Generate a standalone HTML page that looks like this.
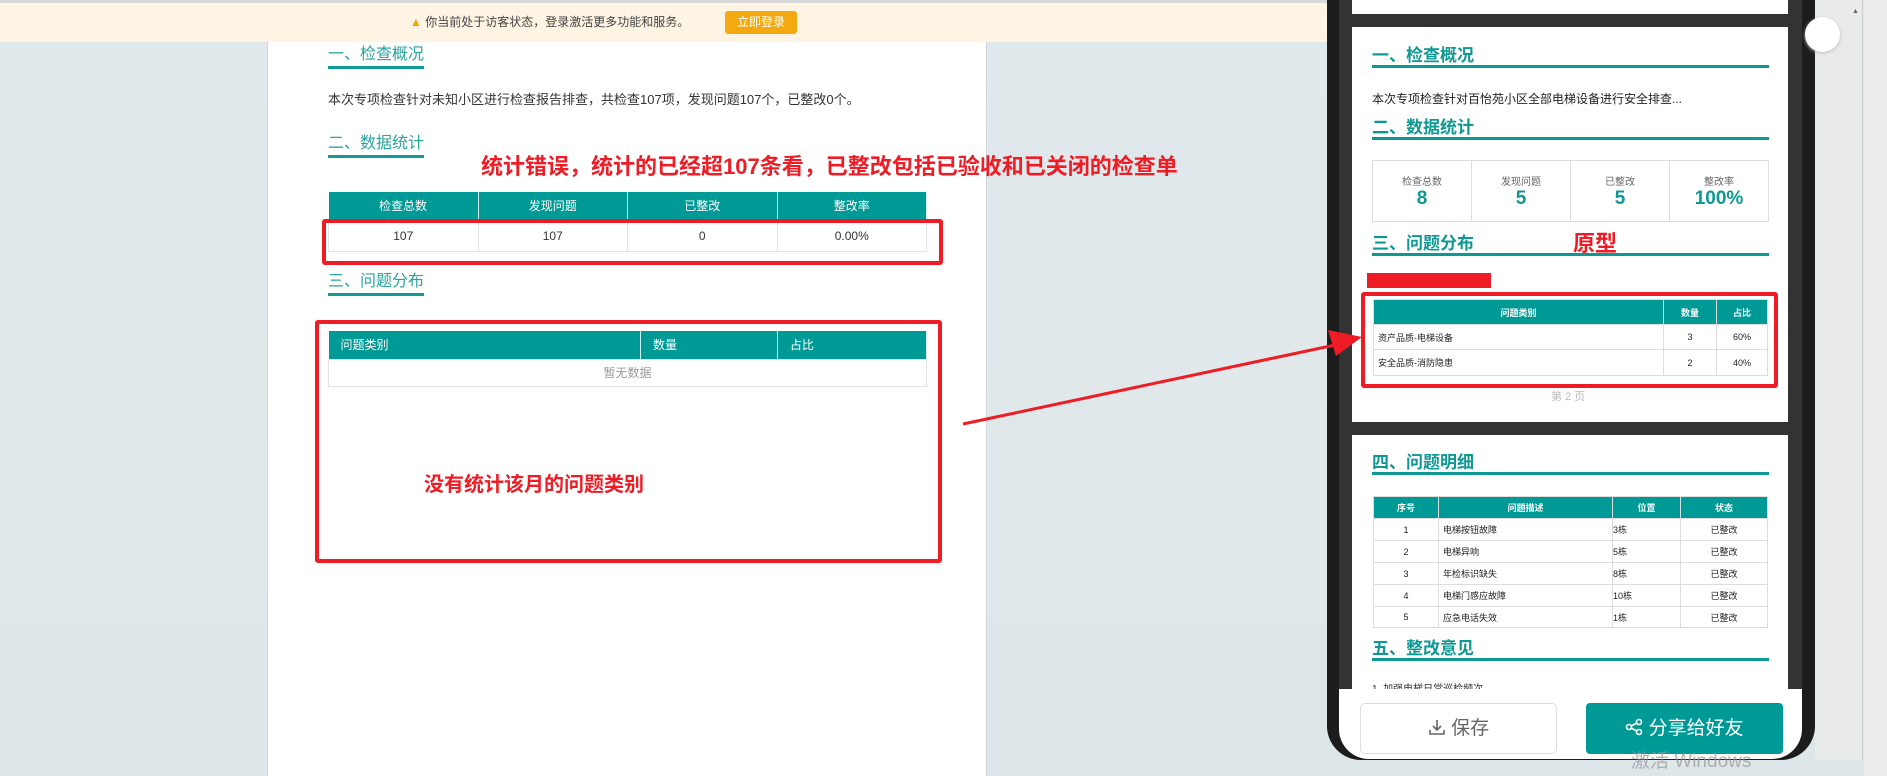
<!DOCTYPE html>
<html><head><meta charset="utf-8"><style>
*{margin:0;padding:0;box-sizing:border-box}
body{width:1887px;height:776px;overflow:hidden;position:relative;background:linear-gradient(180deg,#e2e9ec,#dde6e9);font-family:"Liberation Sans","Noto Sans CJK SC",sans-serif}
.abs{position:absolute}
.banner{left:0;top:0;width:1327px;height:42px;background:#fdf4e3;border-top:3px solid #d8d8d8}
.page{left:267px;top:42px;width:720px;height:734px;background:#fff;border-left:1px solid #d0d8dc;border-right:1px solid #d0d8dc}
.h{color:#2aa3a0;font-size:16px;border-bottom:3px solid #119b97;padding-bottom:1px;line-height:20px}
table{border-collapse:collapse;table-layout:fixed}
.t1{left:328px;width:599px;font-size:12px;color:#333}
.t1 th{background:#009a96;color:#fff;font-weight:normal;height:28px;border-right:1px solid #d9eeee}
.t1 td{height:31px;text-align:center;border:1px solid #e3e3e3}
.red{color:#ee1c25;font-weight:bold}
.rbox{border:4px solid #ee1c25;border-radius:3px}
.phone{left:1327px;top:0;width:488px;height:760px;background:#1c1c1c;border-radius:0 0 34px 34px}
.inner{left:1339px;top:0;width:463px;height:700px;background:#333}
.pg{left:1352px;width:436px;background:#fff}
.ph{left:1372px;width:397px;color:#0e9894;font-size:17px;font-weight:bold;border-bottom:3px solid #0e9894;height:21px;line-height:18px}
.t2{font-size:9px;color:#222}
.t2 th{background:#009a96;color:#fff;border:1px solid #ddd;font-size:9px}
.t2 td{border:1px solid #ddd}
</style></head><body>
<div class="abs banner"></div>
<div class="abs" style="left:410px;top:13px;font-size:12px;color:#444"><span style="color:#f0a500">▲</span> 你当前处于访客状态，登录激活更多功能和服务。</div>
<div class="abs" style="left:725px;top:11px;width:72px;height:23px;background:#f4a910;border-radius:3px;color:#fff;font-size:12px;text-align:center;line-height:23px">立即登录</div>
<div class="abs page"></div>
<div class="abs h" style="left:328px;top:45px">一、检查概况</div>
<div class="abs" style="left:328px;top:89px;font-size:13px;color:#333">本次专项检查针对未知小区进行检查报告排查，共检查107项，发现问题107个，已整改0个。</div>
<div class="abs h" style="left:328px;top:134px">二、数据统计</div>
<div class="abs red" style="left:481px;top:149px;font-size:22px">统计错误，统计的已经超107条看，已整改包括已验收和已关闭的检查单</div>
<table class="abs t1" style="top:192px"><tr><th>检查总数</th><th>发现问题</th><th>已整改</th><th>整改率</th></tr>
<tr><td>107</td><td>107</td><td>0</td><td>0.00%</td></tr></table>
<div class="abs rbox" style="left:322px;top:219px;width:621px;height:46px"></div>
<div class="abs h" style="left:328px;top:272px">三、问题分布</div>
<table class="abs t1" style="top:331px"><tr><th style="text-align:left;padding-left:12px;width:312px">问题类别</th><th style="text-align:left;padding-left:12px;width:137px">数量</th><th style="text-align:left;padding-left:12px">占比</th></tr>
<tr><td colspan="3" style="color:#999;height:27px">暂无数据</td></tr></table>
<div class="abs rbox" style="left:315px;top:320px;width:627px;height:243px"></div>
<div class="abs red" style="left:424px;top:468px;font-size:20px">没有统计该月的问题类别</div>
<div class="abs phone"></div><div class="abs inner"></div>
<div class="abs pg" style="top:0;height:14px"></div>
<div class="abs pg" style="top:27px;height:395px"></div>
<div class="abs ph" style="top:47px">一、检查概况</div>
<div class="abs" style="left:1372px;top:90px;font-size:12px;color:#222">本次专项检查针对百怡苑小区全部电梯设备进行安全排查...</div>
<div class="abs ph" style="top:119px">二、数据统计</div>
<div class="abs" style="left:1372px;top:160px;width:397px;height:62px;border:1px solid #ddd;display:flex">
<div style="flex:1;border-right:1px solid #ddd;text-align:center"><div style="font-size:10px;color:#666;margin-top:12px">检查总数</div><div style="font-size:19px;font-weight:bold;color:#0e9894">8</div></div>
<div style="flex:1;border-right:1px solid #ddd;text-align:center"><div style="font-size:10px;color:#666;margin-top:12px">发现问题</div><div style="font-size:19px;font-weight:bold;color:#0e9894">5</div></div>
<div style="flex:1;border-right:1px solid #ddd;text-align:center"><div style="font-size:10px;color:#666;margin-top:12px">已整改</div><div style="font-size:19px;font-weight:bold;color:#0e9894">5</div></div>
<div style="flex:1;text-align:center"><div style="font-size:10px;color:#666;margin-top:12px">整改率</div><div style="font-size:19px;font-weight:bold;color:#0e9894">100%</div></div></div>
<div class="abs ph" style="top:235px">三、问题分布</div>
<div class="abs red" style="left:1573px;top:226px;font-size:22px">原型</div>
<div class="abs" style="left:1367px;top:273px;width:124px;height:15px;background:#ee1c25"></div>
<table class="abs t2" style="left:1373px;top:299px;width:395px">
<tr style="height:25px"><th>问题类别</th><th style="width:53px">数量</th><th style="width:51px">占比</th></tr>
<tr style="height:25px"><td style="padding-left:4px">资产品质-电梯设备</td><td style="text-align:center">3</td><td style="text-align:center">60%</td></tr>
<tr style="height:26px"><td style="padding-left:4px">安全品质-消防隐患</td><td style="text-align:center">2</td><td style="text-align:center">40%</td></tr></table>
<div class="abs rbox" style="left:1361px;top:292px;width:417px;height:96px"></div>
<div class="abs" style="left:1551px;top:388px;font-size:11px;color:#bbb">第 2 页</div>
<div class="abs pg" style="top:435px;height:260px"></div>
<div class="abs ph" style="top:454px">四、问题明细</div>
<table class="abs t2" style="left:1373px;top:496px;width:395px">
<tr style="height:22px"><th style="width:65px">序号</th><th>问题描述</th><th style="width:68px">位置</th><th style="width:87px">状态</th></tr>
<tr style="height:22px"><td align="center">1</td><td style="padding-left:4px">电梯按钮故障</td><td>3栋</td><td align="center">已整改</td></tr>
<tr style="height:22px"><td align="center">2</td><td style="padding-left:4px">电梯异响</td><td>5栋</td><td align="center">已整改</td></tr>
<tr style="height:22px"><td align="center">3</td><td style="padding-left:4px">年检标识缺失</td><td>8栋</td><td align="center">已整改</td></tr>
<tr style="height:22px"><td align="center">4</td><td style="padding-left:4px">电梯门感应故障</td><td>10栋</td><td align="center">已整改</td></tr>
<tr style="height:21px"><td align="center">5</td><td style="padding-left:4px">应急电话失效</td><td>1栋</td><td align="center">已整改</td></tr></table>
<div class="abs ph" style="top:640px">五、整改意见</div>
<div class="abs" style="left:1372px;top:680px;font-size:10px;color:#333">1. 加强电梯日常巡检频次</div>
<div class="abs" style="left:1339px;top:689px;width:463px;height:70px;background:#fff;border-radius:0 0 30px 30px"></div>
<div class="abs" style="left:1360px;top:703px;width:197px;height:51px;border:1px solid #ddd;border-radius:5px;text-align:center;line-height:49px;font-size:19px;color:#666"><svg width="18" height="18" viewBox="0 0 18 18" style="vertical-align:-2px"><path d="M9 2v10M5 8l4 4 4-4M2 12v4h14v-4" fill="none" stroke="#666" stroke-width="1.6"/></svg> 保存</div>
<div class="abs" style="left:1586px;top:703px;width:197px;height:51px;background:#009a96;border-radius:4px;text-align:center;line-height:51px;font-size:19px;color:#fff"><svg width="18" height="18" viewBox="0 0 18 18" style="vertical-align:-2px"><circle cx="14" cy="4" r="2.5" fill="none" stroke="#fff" stroke-width="1.6"/><circle cx="4" cy="9" r="2.5" fill="none" stroke="#fff" stroke-width="1.6"/><circle cx="14" cy="14" r="2.5" fill="none" stroke="#fff" stroke-width="1.6"/><path d="M6 8l6-3M6 10l6 3" stroke="#fff" stroke-width="1.6"/></svg> 分享给好友</div>
<div class="abs" style="left:1631px;top:746px;font-size:19px;color:rgba(150,150,150,.7)">激活 Windows</div>
<div class="abs" style="left:1815px;top:0;width:48px;height:760px;background:#e9eaea;border-right:1px solid #ccc"></div>
<div class="abs" style="left:1805px;top:17px;width:35px;height:35px;border-radius:50%;background:#fff;box-shadow:0 1px 3px #bbb"></div>
<div class="abs" style="left:1852px;top:8px;font-size:7px;color:#666">▲</div>
<div class="abs" style="left:1864px;top:0;width:23px;height:776px;background:#ececec"></div>
<svg class="abs" style="left:0;top:0" width="1887" height="776"><line x1="963" y1="424" x2="1335" y2="345" stroke="#ee1c25" stroke-width="3"/><polygon points="1362,337 1328,330 1336,356" fill="#ee1c25"/></svg>
</body></html>
